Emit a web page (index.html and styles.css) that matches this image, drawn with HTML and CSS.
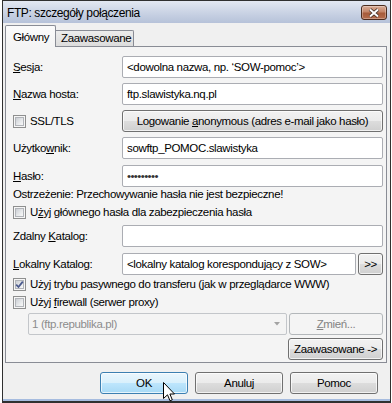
FILE: index.html
```html
<!DOCTYPE html>
<html lang="pl">
<head>
<meta charset="utf-8">
<title>FTP: szczegóły połączenia</title>
<link rel="stylesheet" href="styles.css">
</head>
<body>
<div class="window">
  <div class="titlebar">
    <span class="title">FTP: szczegóły połączenia</span>
    <div class="close">
      <svg width="12" height="10" viewBox="0 0 12 10"><path d="M2 1.5 L10 8.5 M10 1.5 L2 8.5" stroke="#3a2a22" stroke-width="3.6"/><path d="M2 1.5 L10 8.5 M10 1.5 L2 8.5" stroke="#fff" stroke-width="2"/></svg>
    </div>
  </div>
  <div class="client">
    <div class="tabs">
      <div class="tab active">Główny</div>
      <div class="tab">Zaawasowane</div>
    </div>
    <div class="panel">
      <div class="row r1"><span class="lbl"><span><u>S</u>esja:</span></span><span class="field">&lt;dowolna nazwa, np. ‘SOW-pomoc’&gt;</span></div>
      <div class="row r2"><span class="lbl"><span><u>N</u>azwa hosta:</span></span><span class="field">ftp.slawistyka.nq.pl</span></div>
      <div class="row r3"><span class="lbl"><span class="cb"><span class="cbi"></span></span><span>SSL/TLS</span></span><span class="btn wide"><span>Logowanie <u>a</u>nonymous (adres e-mail jako hasło)</span></span></div>
      <div class="row r4"><span class="lbl"><span>Użytko<u>w</u>nik:</span></span><span class="field">sowftp_POMOC.slawistyka</span></div>
      <div class="row r5"><span class="lbl"><span><u>H</u>asło:</span></span><span class="field pass">•••••••••</span></div>
      <div class="note">Ostrzeżenie: Przechowywanie hasła nie jest bezpieczne!</div>
      <div class="chkrow r7"><span class="cb"><span class="cbi"></span></span><span>U<u>ż</u>yj głównego hasła dla zabezpieczenia hasła</span></div>
      <div class="row r8"><span class="lbl"><span>Zdalny <u>K</u>atalog:</span></span><span class="field"></span></div>
      <div class="row r9"><span class="lbl"><span><u>L</u>okalny Katalog:</span></span><span class="field short">&lt;lokalny katalog korespondujący z SOW&gt;</span><span class="btn small"><span>&gt;&gt;</span></span></div>
      <div class="chkrow r10"><span class="cb"><span class="cbi"><svg width="9" height="9" viewBox="0 0 9 9"><path d="M1.2 4.6 L3.5 7 L7.8 1.6" fill="none" stroke="#4b5a8e" stroke-width="1.8"/></svg></span></span><span>Użyj trybu pasywnego do transferu (jak w przeglądarce WWW)</span></div>
      <div class="chkrow r11"><span class="cb"><span class="cbi"></span></span><span>Użyj <u>f</u>irewall (serwer proxy)</span></div>
      <div class="row r12"><span class="select"><span>1 (ftp.republika.pl)</span><svg width="6" height="4" viewBox="0 0 6 4"><path d="M0 0 H6 L3 3.5 Z" fill="#a3a3a3"/></svg></span><span class="btn disabled zmien"><span><u>Z</u>mień...</span></span></div>
      <div class="row r13"><span class="btn adv"><span>Zaawasowane -&gt;</span></span></div>
    </div>
    <div class="buttons">
      <span class="btn ok"><span>OK</span></span><span class="btn"><span>Anuluj</span></span><span class="btn"><span>Pomoc</span></span>
    </div>
  </div>
  <div class="frame-bottom"></div>
</div>
<svg class="cursor" width="12" height="20" viewBox="0 0 12 20"><path d="M0.5 0.5 L0.5 16.5 L4.5 12.8 L7 18.8 L9.3 17.8 L6.9 12 L11.5 12 Z" fill="#fff" stroke="#000" stroke-width="1" stroke-linejoin="miter"/></svg>
</body>
</html>
```

FILE: styles.css
```css
* { box-sizing: border-box; }
html, body { margin: 0; padding: 0; }
body {
  position: relative;
  width: 392px;
  height: 403px;
  overflow: hidden;
  background: #ffffff;
  font-family: "Liberation Sans", Arial, sans-serif;
  font-size: 11.5px;
  letter-spacing: -0.35px;
  color: #000;
}
u { text-decoration: underline; text-decoration-thickness: 1px; text-underline-offset: 1px; }

.window {
  margin-left: 2px;
  width: 389px;
  height: 403px;
  border: 1px solid #303030;
  border-bottom-width: 2px;
  background: #f0f0f0;
  display: flex;
  flex-direction: column;
}
.titlebar {
  height: 22px;
  flex: none;
  display: flex;
  justify-content: space-between;
  align-items: flex-start;
  padding: 0 3px 0 4px;
  background: linear-gradient(to bottom, #e3e8f2 0%, #cbd4e5 50%, #b6c2d9 100%);
}
.title { margin-top: 5px; line-height: 15px; font-size: 12px; letter-spacing: -0.4px; }
.close {
  margin-top: 4px;
  width: 26px;
  height: 15px;
  border: 1px solid #4b2c1e;
  border-radius: 3px;
  background: linear-gradient(#d9ad98 0%, #c48568 45%, #a65b3a 55%, #b56d4d 100%);
  box-shadow: inset 0 0 0 1px rgba(255,255,255,0.3);
  display: flex;
  align-items: center;
  justify-content: center;
}
.client {
  flex: 1;
  display: flex;
  flex-direction: column;
  padding: 0 3px 0 2px;
}
.tabs {
  margin-top: 2px;
  height: 21px;
  display: flex;
  align-items: flex-end;
  flex: none;
}
.tab {
  height: 16px;
  width: 78px;
  flex: none;
  border: 1px solid #898c95;
  border-left: 0;
  border-bottom: 0;
  border-radius: 0 2px 0 0;
  background: linear-gradient(#ececec, #dcdcdc);
  padding-left: 5px;
  line-height: 15px;
  white-space: nowrap;
}
.tab.active {
  position: relative;
  z-index: 1;
  height: 22px;
  width: 51px;
  margin-bottom: -1px;
  border-left: 1px solid #898c95;
  border-radius: 2px 2px 0 0;
  background: linear-gradient(#fbfbfb, #f4f4f4);
  padding-left: 7px;
  padding-top: 4px;
  line-height: 14px;
}
.panel {
  border: 1px solid #898c95;
  background: #f4f4f4;
  padding: 0 3px 2px 7px;
  display: flex;
  flex-direction: column;
  flex: none;
}
.row { display: flex; height: 22px; flex: none; }
.lbl {
  width: 109px;
  flex: none;
  display: flex;
  align-items: center;
  white-space: nowrap;
}
.field {
  width: 261px;
  flex: none;
  background: #fff;
  border: 1px solid #abadb3;
  border-radius: 2px;
  padding-left: 4px;
  line-height: 20px;
  white-space: nowrap;
  overflow: hidden;
}
.field.short { width: 234px; }
.field.pass { color: #333; letter-spacing: -0.6px; }
.note { height: 14px; line-height: 14px; white-space: nowrap; flex: none; }
.chkrow {
  display: flex;
  align-items: center;
  height: 14px;
  line-height: 14px;
  white-space: nowrap;
  flex: none;
}
.cb {
  width: 13px;
  height: 13px;
  flex: none;
  border: 1px solid #8e8f8f;
  background: #f6f6f6;
  padding: 1px;
  margin-right: 4px;
}
.cbi {
  display: flex;
  align-items: center;
  justify-content: center;
  width: 100%;
  height: 100%;
  border: 1px solid #b1b4b9;
  background: linear-gradient(135deg, #cbcfd4 0%, #e8eaec 60%, #f8f8f8 100%);
  overflow: visible;
}
.cbi svg { flex: none; }

.r1 { margin-top: 9px; }
.r2 { margin-top: 5px; }
.r3 { margin-top: 5px; }
.r4 { margin-top: 5px; }
.r5 { margin-top: 6px; }
.r7 { margin-top: 4px; }
.r8 { margin-top: 6px; }
.r9 { margin-top: 6px; }
.r10 { margin-top: 2px; }
.r11 { margin-top: 4px; }
.r12 { margin-top: 4px; }
.r13 { margin-top: 3px; justify-content: flex-end; }

.btn {
  display: flex;
  align-items: center;
  justify-content: center;
  flex: none;
  height: 22px;
  border: 1px solid #707070;
  border-radius: 3px;
  background: linear-gradient(#f2f2f2 0%, #ebebeb 49%, #dddddd 50%, #cfcfcf 100%);
  box-shadow: inset 0 0 0 1px rgba(255,255,255,0.7);
  white-space: nowrap;
}
.btn.wide { width: 261px; }
.btn.small { width: 25px; margin-left: 2px; }
.select {
  width: 259px;
  flex: none;
  margin-left: 15px;
  border: 1px solid #c3c6ca;
  border-radius: 2px;
  background: #f4f4f4;
  color: #8c8c8c;
  padding: 0 6px 0 3px;
  display: flex;
  align-items: center;
  justify-content: space-between;
  white-space: nowrap;
}
.btn.disabled {
  border-color: #b3b7ba;
  background: #f4f4f4;
  color: #838383;
  box-shadow: none;
}
.zmien { width: 94px; margin-left: 2px; }
.adv { width: 95px; }

.buttons {
  margin-top: 9px;
  display: flex;
  justify-content: flex-end;
  gap: 7px;
  padding-right: 9px;
  flex: none;
}
.buttons .btn { width: 88px; }
.btn.ok {
  border-color: #3c7fb1;
  background: linear-gradient(#eaf6fd 0%, #d9f0fc 49%, #bee6fd 50%, #a7d9f5 100%);
}
.frame-bottom {
  margin-top: auto;
  height: 2px;
  flex: none;
  background: #a6bcdf;
}
.cursor {
  position: absolute;
  left: 163px;
  top: 382px;
}
```
